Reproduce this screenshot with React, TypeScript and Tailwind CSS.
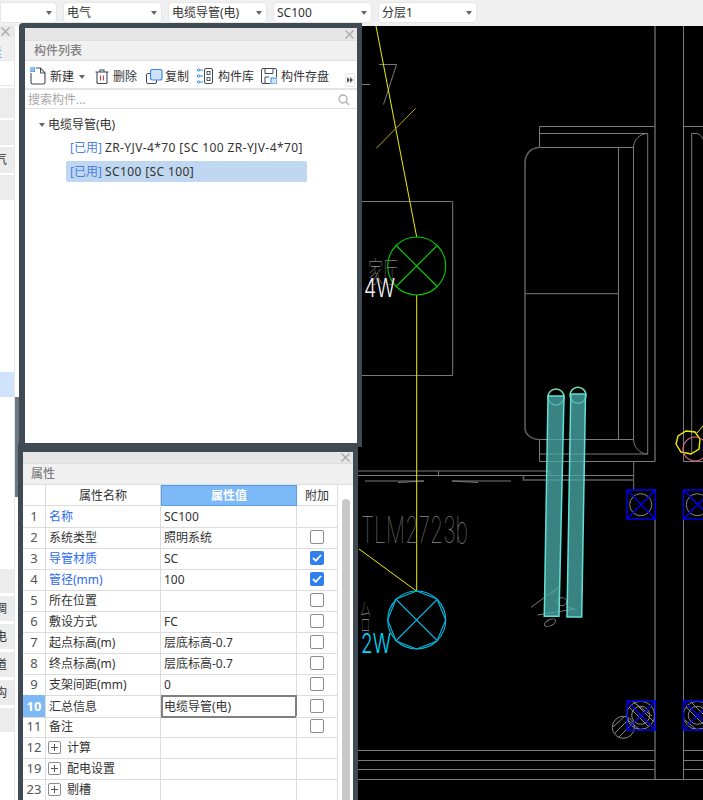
const FONT = "font-['Noto_Sans','Noto_Sans_CJK_SC',sans-serif]";

const SELECTS = [
  { label: "", width: "w-[57px]", rounded: "rounded-r-[4px]" },
  { label: "电气", width: "w-[99px]", rounded: "rounded-[4px]" },
  { label: "电缆导管(电)", width: "w-[99px]", rounded: "rounded-[4px]" },
  { label: "SC100", width: "w-[99px]", rounded: "rounded-[4px]" },
  { label: "分层1", width: "w-[99px]", rounded: "rounded-[4px]" },
];

type Row = {
  no: number;
  name: string;
  value?: string;
  blue?: boolean;
  check?: "on" | "off";
  group?: boolean;
  active?: boolean;
};

const ROWS: Row[] = [
  { no: 1, name: "名称", value: "SC100", blue: true },
  { no: 2, name: "系统类型", value: "照明系统", check: "off" },
  { no: 3, name: "导管材质", value: "SC", blue: true, check: "on" },
  { no: 4, name: "管径(mm)", value: "100", blue: true, check: "on" },
  { no: 5, name: "所在位置", check: "off" },
  { no: 6, name: "敷设方式", value: "FC", check: "off" },
  { no: 7, name: "起点标高(m)", value: "层底标高-0.7", check: "off" },
  { no: 8, name: "终点标高(m)", value: "层底标高-0.7", check: "off" },
  { no: 9, name: "支架间距(mm)", value: "0", check: "off" },
  { no: 10, name: "汇总信息", value: "电缆导管(电)", check: "off", active: true },
  { no: 11, name: "备注", check: "off" },
  { no: 12, name: "计算", group: true },
  { no: 19, name: "配电设置", group: true },
  { no: 23, name: "剔槽", group: true },
];

function Caret() {
  return <span className="block h-0 w-0 border-x-[3.5px] border-t-[4px] border-x-transparent border-t-[#666]" />;
}

function CloseX({ className }: { className?: string }) {
  return (
    <svg width="9" height="9" viewBox="0 0 9 9" className={className}>
      <path d="M0.5 0.5 8.5 8.5M8.5 0.5 0.5 8.5" stroke="#a8a8a8" strokeWidth="1.3" />
    </svg>
  );
}

function NewIcon() {
  return (
    <svg width="16" height="18" viewBox="0 0 16 18" className="shrink-0">
      <path d="M1 6v9.500a1.500 1.500 0 0 0 1.500 1.500h11a1.500 1.500 0 0 0 1.500-1.500V6l-4.500-5H6" fill="none" stroke="#3f4a54" strokeWidth="1.100" />
      <path d="M10.500 1v5h4.500" fill="none" stroke="#3f4a54" strokeWidth="1" />
      <rect x="0" y="0" width="5" height="5" fill="#3b8eea" />
      <path d="M1 0v5M3 0v5M0 1h5M0 3h5" stroke="#cfe4fb" strokeWidth="0.700" />
    </svg>
  );
}

function TrashIcon() {
  return (
    <svg width="14" height="15" viewBox="0 0 14 15" className="shrink-0">
      <path d="M0.500 3h13M5 3V1h4v2" fill="none" stroke="#3f4a54" strokeWidth="1.100" />
      <path d="M2 3v10.500a1 1 0 0 0 1 1h8a1 1 0 0 0 1-1V3" fill="none" stroke="#3f4a54" strokeWidth="1.100" />
      <path d="M5.500 6.500v5M8.500 6.500v5" stroke="#e03b3b" strokeWidth="1.100" />
    </svg>
  );
}

function CopyIcon() {
  return (
    <svg width="17" height="15" viewBox="0 0 17 15" className="shrink-0">
      <rect x="0.500" y="4.500" width="10" height="10" rx="1.500" fill="#fff" stroke="#3f4a54" />
      <rect x="4.500" y="0.500" width="11.500" height="10.500" rx="2" fill="#cfe2fa" stroke="#3a8ae8" strokeWidth="1.200" />
    </svg>
  );
}

function LibraryIcon() {
  return (
    <svg width="16" height="16" viewBox="0 0 16 16" className="shrink-0">
      <rect x="7.500" y="0.500" width="8" height="15" rx="1.500" fill="none" stroke="#3f4a54" />
      <rect x="10" y="3.500" width="3" height="3" fill="none" stroke="#3f4a54" strokeWidth="0.900" />
      <rect x="10" y="9.500" width="3" height="3" fill="none" stroke="#3f4a54" strokeWidth="0.900" />
      <g fill="none" stroke="#3a8ae8">
        <circle cx="1.500" cy="2" r="1.200" />
        <circle cx="1.500" cy="8" r="1.200" />
        <circle cx="1.500" cy="14" r="1.200" />
        <path d="M3 2h3M3 8h3M3 14h3" />
      </g>
    </svg>
  );
}

function SaveIcon() {
  return (
    <svg width="16" height="16" viewBox="0 0 16 16" className="shrink-0">
      <path d="M9 15.500H2a1.500 1.500 0 0 1-1.500-1.500V2A1.500 1.500 0 0 1 2 .5h12A1.500 1.500 0 0 1 15.500 2v7" fill="none" stroke="#3f4a54" />
      <path d="M4 1v4.500h8V1M4 15V9h4" fill="none" stroke="#3f4a54" />
      <rect x="10" y="10" width="6" height="6" fill="#cfe2fa" stroke="#3a8ae8" />
    </svg>
  );
}

function Tool({ icon, label, className }: { icon: React.ReactNode; label: string; className: string }) {
  return (
    <div className={`flex items-center ${className}`}>
      {icon}
      <span className="whitespace-nowrap pt-[1px]">{label}</span>
    </div>
  );
}

function SideRow({ text, className }: { text?: string; className: string }) {
  return (
    <div className={`flex items-center justify-end overflow-hidden pr-[7px] text-[12px] text-[#333] ${className}`}>
      <span className="whitespace-nowrap">{text}</span>
    </div>
  );
}

function Sidebar() {
  return (
    <aside className="flex w-[19px] shrink-0 bg-white">
      <div className="flex h-full w-[15px] flex-col border-r border-[#e6e6e6]">
        <div className="flex h-[11px] shrink-0 items-center justify-end bg-[#e8e8e8] pr-[4px]">
          <CloseX />
        </div>
        <div className="h-[23px] shrink-0 overflow-hidden bg-[#f0f0f0]">
          <span className="relative -left-[10px] top-[3px] text-[12px] text-[#3a8ae8]">栏</span>
        </div>
        <SideRow text="类" className="h-[26px] shrink-0 rounded-r-[3px] !pr-[14px] border border-l-0 border-[#e8e8e8]" />
        <div className="mt-[2px] h-[30px] shrink-0 bg-[#ececec]" />
        <div className="mt-[2px] h-[25px] shrink-0 bg-[#ececec]" />
        <SideRow text="电气" className="mt-[2px] h-[26px] shrink-0 bg-[#ececec]" />
        <div className="mt-[2px] h-[25px] shrink-0 bg-[#ececec]" />
        <div className="h-[172px] shrink-0" />
        <div className="h-[25px] shrink-0 bg-[#cfe3fa]" />
        <div className="h-[172px] shrink-0" />
        <div className="h-[24px] shrink-0 bg-[#ececec]" />
        <SideRow text="空调" className="mt-[3px] h-[25px] shrink-0 bg-[#ececec]" />
        <SideRow text="配电" className="mt-[3px] h-[25px] shrink-0 bg-[#ececec]" />
        <SideRow text="管道" className="mt-[3px] h-[25px] shrink-0 bg-[#ececec]" />
        <SideRow text="结构" className="mt-[3px] h-[25px] shrink-0 bg-[#ececec]" />
        <div className="mt-[3px] h-[24px] shrink-0 bg-[#ececec]" />
      </div>
      <div className="h-[100px] w-[4px] translate-y-[371px] bg-[#6c7680]" />
    </aside>
  );
}

function Drawing() {
  return (
    <svg viewBox="19 26 684 774" width="684" height="774" className="block">
      <g fill="none" stroke="#7a7a7a" strokeWidth="1">
        {/* room outlines */}
        <path d="M362 84.500h8M379 64.500h17.500L383.500 104.500" />
        <path d="M360 201.500h92.700V375.500H360" />
        <path d="M539.500 147.500V126.500H655M539.500 133.500H647.700V454M618.500 147.500V439.500M525 293.700H618.500" />
        <path d="M539.500 147.500H633.500V439.500H539.500M633.500 147.500C633.500 140 640 133.500 647.700 133.500M633.500 439.500C633.500 447 640 454 647.700 454" />
        <path d="M539.500 439.500V461.500H655M539.500 454H647.700M633.700 461.500V490" />
        <path d="M683.500 26V461.500M683.500 519V779M683.500 126.500H703M683.500 461.500H703M691.700 133V454M691.700 133.500H697C700 134 702 137 703 139" />
        <path d="M358 471H550M550 471V475.500M358 475.500H550M438.500 471V475.500M523.500 475.500H633.700" />
        <path d="M365 481H424M398 482.500L424 481M452 481H511M452 481L478 482.500" />
        <path d="M358 750.500H655M358 760.500H655M358 769.500H655M358 779.500H703M683 750.500H703M683 760.500H703M683 769.500H703" />
      </g>
      <g fill="none" stroke="#5c5c5c" strokeWidth="1.600">
        <path d="M655 26V461.500M655 519V779" />
        <path d="M539.500 147.500C531 147.500 525 154 525 163V428C525 434 531 439.500 539.500 439.500" />
        <path d="M523.500 475.500V480H633.700" />
      </g>

      {/* wires */}
      <g fill="none" stroke="#eded00">
        <path d="M376 26 416.700 237M416.700 295V591M359 549 416 590.700" />
      </g>
      <path d="M376.300 148.300 415.700 108.300" stroke="#b8a800" />

      {/* lamps */}
      <g fill="none" stroke="#00d000" strokeWidth="1.100">
        <circle cx="416.700" cy="266" r="29" />
        <path d="M396.700 246 436.700 286M436.700 246 396.700 286" />
      </g>
      <g fill="none" stroke="#00b8e0" strokeWidth="1.100">
        <circle cx="416.700" cy="620" r="29" />
        <polygon points="416.700,591 437,599 445.700,620 437,641 416.700,649 396,641 387.700,620 396,599" />
        <path d="M396.700 600 436.700 640M436.700 600 396.700 640" />
      </g>

      {/* blue boxes */}
      <g fill="none" stroke="#8a8a8a">
        <circle cx="640.700" cy="504.700" r="11" />
        <circle cx="697.300" cy="504.700" r="11" />
        <circle cx="640.700" cy="715.300" r="14" />
        <circle cx="640.700" cy="715.300" r="9" />
        <circle cx="697.300" cy="715.300" r="14" />
        <circle cx="697.300" cy="715.300" r="9" />
        <path d="M629 707 649 727M634 702 654 722M628 720 640 730M632 701 652 716M686 707 706 727M691 702 711 722M685 720 697 730" />
        <circle cx="623.300" cy="727.300" r="11" />
        <path d="M615 733 630 718M619 737 634 722M613 727 625 716" />
      </g>
      <g fill="none" stroke="#0000f0" strokeWidth="1.400">
        <path d="M627 490H655.300V519H627ZM627 490 655.300 519M655.300 490 627 519" />
        <path d="M683.500 490H712V519H683.500ZM683.500 490 712 519M712 490 683.500 519" />
        <path d="M627 701H655.300V730H627ZM627 701 655.300 730M655.300 701 627 730" />
        <path d="M683.500 701H712V730H683.500ZM683.500 701 712 730M712 701 683.500 730" />
      </g>

      <polygon points="686,431 695,432 700,439 699,449 691,454 681,452 676,444 678,436" fill="none" stroke="#eded00" strokeWidth="1.400" />
      <path d="M697 433 703 426" stroke="#eded00" />
      <circle cx="695" cy="449" r="12" fill="none" stroke="#e07090" strokeWidth="1.100" />

      {/* sketch under the risers */}
      <g fill="none" stroke="#7a7a7a">
        <path d="M531 607.300 558.300 587.300 551 595M537.300 615 575 609 566 607" />
        <ellipse cx="550" cy="622.700" rx="6" ry="3" transform="rotate(-25 550 622.700)" />
        <ellipse cx="561.700" cy="601.700" rx="5" ry="4" />
      </g>

      {/* risers */}
      <g stroke="#62e0d8" strokeWidth="1.500">
        <circle cx="556" cy="397" r="8" fill="none" stroke="#70e0b0" />
        <circle cx="578" cy="395.300" r="8" fill="none" stroke="#70e0b0" />
        <polygon points="548,396 564,396 559,616.300 544.300,616.300" fill="#4aa8a8" fillOpacity="0.78" />
        <polygon points="570.800,394 585.500,394 581.700,617 567,617" fill="#4aa8a8" fillOpacity="0.78" />
      </g>

      {/* drawing text */}
      <g fontFamily="Inter, 'Noto Sans CJK SC', sans-serif" fontWeight="100">
        <text x="368" y="283" fontSize="29" fill="#808080" textLength="30" lengthAdjust="spacingAndGlyphs">家厅</text>
        <text x="364" y="297" fontSize="26" fontWeight="300" fill="#f4f4f4" textLength="31" lengthAdjust="spacingAndGlyphs">4W</text>
        <text x="361" y="543" fontSize="37" fill="#8a8a8a" textLength="107" lengthAdjust="spacingAndGlyphs">TLM2723b</text>
        <text x="360" y="630" fontSize="34" fill="#808080" textLength="11" lengthAdjust="spacingAndGlyphs">台</text>
        <text x="361" y="653" fontSize="27" fontWeight="300" fill="#00d8ff" textLength="30" lengthAdjust="spacingAndGlyphs">2W</text>
      </g>
    </svg>
  );
}

function ComponentList() {
  return (
    <section className="absolute left-0 top-[-3px] z-10 h-[424px] w-[343px] rounded-tl-[4px] bg-[#3f4a54] pb-[4px] pl-[6px] pr-[5px] pt-[5px]">
      <div className="flex h-full flex-col bg-white">
        <div className="flex h-[12px] shrink-0 items-center justify-end bg-[#e6e6e6] pr-[3px]">
          <CloseX />
        </div>
        <div className="flex h-[21px] shrink-0 items-center border-y border-[#dedede] bg-[#f0f0f0] pl-[9px] text-[12px] font-medium text-[#808080]">
          构件列表
        </div>
        <div className="relative flex h-[27px] shrink-0 items-center pl-[5px] pt-[3px] text-[12px] text-[#333]">
          <Tool icon={<NewIcon />} label="新建" className="w-[50px] gap-[4px]" />
          <div className="ml-[-1px] mr-[9px] flex w-[7px] items-center pt-[1px]">
            <Caret />
          </div>
          <Tool icon={<TrashIcon />} label="删除" className="w-[51px] gap-[4px]" />
          <Tool icon={<CopyIcon />} label="复制" className="w-[51px] gap-[2px]" />
          <Tool icon={<LibraryIcon />} label="构件库" className="w-[64px] gap-[5px]" />
          <Tool icon={<SaveIcon />} label="构件存盘" className="gap-[4px]" />
          <div className="absolute left-[320px] top-[12px] flex h-[14px] w-[10px] items-center justify-center rounded-[2px] border border-[#e6e6e6]">
            <span className="h-0 w-0 border-y-[3px] border-l-[3px] border-y-transparent border-l-[#555]" />
            <span className="h-0 w-0 border-y-[3px] border-l-[3px] border-y-transparent border-l-[#555]" />
          </div>
        </div>
        <div className="flex h-[21px] shrink-0 items-center justify-between border-y-2 border-b border-[#e4e4e4] pl-[3px] pr-[7px] pt-[1px] text-[12px] text-[#a8a8a8]">
          <span>搜索构件...</span>
          <svg width="12" height="12" viewBox="0 0 12 12">
            <circle cx="5" cy="5" r="4" fill="none" stroke="#b0b0b0" strokeWidth="1.300" />
            <path d="M8 8 11 11" stroke="#b0b0b0" strokeWidth="1.300" />
          </svg>
        </div>
        <div className="pt-[6px] text-[12px] text-[#333]">
          <div className="flex h-[20px] items-center pl-[14px]">
            <span className="mr-[3px] block h-0 w-0 border-x-[3.500px] border-t-[4px] border-x-transparent border-t-[#666]" />
            <span>电缆导管(电)</span>
          </div>
          <div className="ml-[41px] mt-[2px] flex h-[21px] w-[241px] items-center gap-[3px] pl-[4px]">
            <span className="text-[#4a80e0]">[已用]</span>
            <span className="whitespace-nowrap tracking-[0.4px]">ZR-YJV-4*70 [SC 100 ZR-YJV-4*70]</span>
          </div>
          <div className="ml-[41px] mt-[3px] flex h-[21px] w-[241px] items-center gap-[3px] rounded-[2px] bg-[#bfd7f0] pl-[4px]">
            <span className="text-[#4a80e0]">[已用]</span>
            <span className="whitespace-nowrap tracking-[0.4px]">SC100 [SC 100]</span>
          </div>
        </div>
      </div>
    </section>
  );
}

function Checkbox({ on }: { on: boolean }) {
  if (on) {
    return (
      <span className="flex h-[14px] w-[14px] items-center justify-center rounded-[2px] bg-[#2f80ed]">
        <svg width="10" height="8" viewBox="0 0 10 8">
          <path d="M1 4 3.800 6.800 9 1" fill="none" stroke="#fff" strokeWidth="1.800" />
        </svg>
      </span>
    );
  }
  return <span className="h-[14px] w-[14px] rounded-[2px] border border-[#8c8c8c] bg-white" />;
}

function PropertyRow({ row }: { row: Row }) {
  return (
    <div className="grid h-[21px] grid-cols-[23px_115px_136px_41px] text-[12px] text-[#333]">
      <div className={`flex items-center justify-center border-b border-r border-[#dcdcdc] pt-[1px] text-[13px] ${row.active ? "bg-[#7db8f7] font-bold text-white" : "text-[#555]"}`}>
        {row.no}
      </div>
      <div className={`flex items-center border-b border-r border-[#dcdcdc] pl-[3px] pt-[1px] ${row.blue ? "text-[#2b6cf0]" : ""}`}>
        {row.group && (
          <span className="ml-[-1px] mr-[6px] flex h-[13px] w-[13px] items-center justify-center rounded-[2px] border border-[#8c8c8c] text-[#555]">
            <svg width="7" height="7" viewBox="0 0 7 7">
              <path d="M0 3.500H7M3.500 0V7" stroke="#555" />
            </svg>
          </span>
        )}
        <span className="whitespace-nowrap">{row.name}</span>
      </div>
      <div className={`flex items-center pt-[1px] ${row.active ? "border-2 border-[#808080] pl-[1px]" : "border-b border-r border-[#dcdcdc] pl-[3px]"}`}>
        {row.value}
      </div>
      <div className="flex items-center justify-center border-b border-r border-[#dcdcdc] pr-[1px]">
        {row.check && <Checkbox on={row.check === "on"} />}
      </div>
    </div>
  );
}

function Properties() {
  return (
    <section className="absolute left-[-1px] top-[417px] z-20 h-[357px] w-[340px] bg-[#3f4a54] pl-[5px] pr-[5px] pt-[9px]">
      <div className="flex h-full flex-col overflow-hidden bg-white">
        <div className="flex h-[11px] shrink-0 items-center justify-end bg-[#e6e6e6] pr-[3px]">
          <CloseX />
        </div>
        <div className="flex h-[22px] shrink-0 items-center border-y border-[#dedede] bg-[#f0f0f0] pl-[8px] text-[12px] font-medium text-[#808080]">
          属性
        </div>
        <div className="flex min-h-0 flex-1">
          <div className="w-[315px] shrink-0">
            <div className="grid h-[21px] grid-cols-[23px_115px_136px_41px] text-center text-[12px] text-[#333]">
              <div className="border-b border-r border-[#dcdcdc]" />
              <div className="flex items-center justify-center border-b border-r border-[#dcdcdc] pt-[1px]">属性名称</div>
              <div className="flex items-center justify-center border border-[#5a9fe6] bg-[#7db8f7] pt-[1px] font-bold text-white">属性值</div>
              <div className="flex items-center justify-center border-b border-r border-[#dcdcdc] pt-[1px]">附加</div>
            </div>
            {ROWS.map((row) => (
              <PropertyRow key={row.no} row={row} />
            ))}
          </div>
          <div className="flex-1 pl-[4px] pt-[14px]">
            <div className="h-full w-[8px] rounded-t-full bg-[#c8c8c8]" />
          </div>
        </div>
      </div>
    </section>
  );
}

export default function App() {
  return (
    <div className={`flex h-[800px] w-[703px] flex-col overflow-hidden bg-black ${FONT}`}>
      <header className="flex h-[26px] shrink-0 items-start gap-[6px] bg-[#f0f0f0] pt-[2px]">
        {SELECTS.map((s, i) => (
          <div
            key={i}
            className={`flex h-[21px] items-center justify-between border border-[#e6e6e6] bg-white pl-[3px] pr-[4px] text-[12px] text-[#333] ${s.width} ${s.rounded}`}
          >
            <span className="whitespace-nowrap">{s.label}</span>
            <Caret />
          </div>
        ))}
      </header>
      <main className="flex min-h-0 flex-1">
        <Sidebar />
        <div className="relative flex-1 bg-black">
          <Drawing />
          <ComponentList />
          <Properties />
        </div>
      </main>
    </div>
  );
}
